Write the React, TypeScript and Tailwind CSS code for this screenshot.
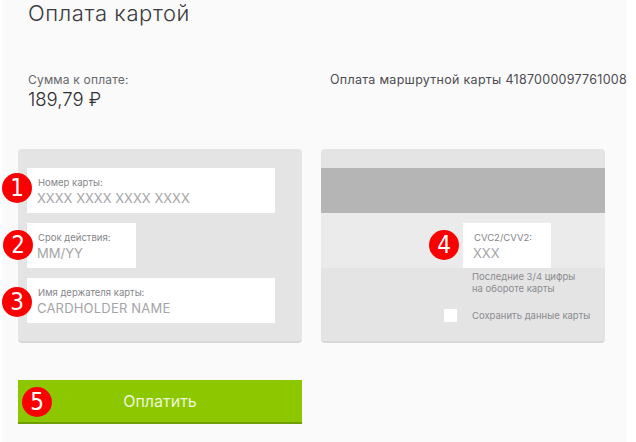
const FONT = "font-['Inter','Open_Sans',sans-serif]";

const Badge = ({ n, className }: { n: number; className: string }) => (
  <span
    className={`absolute flex h-[30px] w-[30px] items-center justify-center rounded-full bg-[#fa0000] font-['DejaVu_Sans_Condensed','DejaVu_Sans',sans-serif] text-[24px] font-normal leading-none tracking-normal text-white [font-stretch:condensed] ${className}`}
  >
    {n}
  </span>
);

const Field = ({
  label,
  placeholder,
  className,
  wide,
}: {
  label: string;
  placeholder: string;
  className: string;
  wide?: boolean;
}) => (
  <div className={`flex h-[45px] flex-col bg-white pl-[10px] pt-[9px] ${className}`}>
    <span className="pl-[1px] text-[9.5px] leading-[11px] text-[#85858a]">{label}</span>
    <span
      className={`mt-[2px] text-[13px] leading-[17px] text-[#a4a4a8] ${wide ? "tracking-[0.2px]" : ""}`}
    >
      {placeholder}
    </span>
  </div>
);

export default function App() {
  return (
    <div className={`h-[442px] w-[636px] overflow-hidden bg-white pl-[2px] ${FONT}`}>
      <div className="h-full w-[625px] bg-[#fafafa] pl-[16px]">
        <h1 className="pl-[10px] text-[22px] font-light leading-[27px] tracking-[0.6px] text-[#3a3a40]">
          Оплата картой
        </h1>

        <div className="mt-[45px] flex items-start justify-between pl-[10px]">
          <div>
            <p className="text-[12px] leading-[16px] tracking-[0.2px] text-[#68686c]">Сумма к оплате:</p>
            <p className="text-[18.5px] font-light leading-[22px] text-[#2e2e34]">189,79 ₽</p>
          </div>
          <p className="whitespace-nowrap text-[12.5px] leading-[16px] tracking-[0.28px] text-[#4c4c52]">
            Оплата маршрутной карты 4187000097761008
          </p>
        </div>

        <div className="mt-[39px] flex gap-[19px]">
          <div className="relative flex h-[194px] w-[284px] flex-col gap-[10px] rounded-[4px] border-b-2 border-[#d8d8d8] bg-[#e4e4e4] pl-[9px] pt-[19px]">
            <Field className="w-[248px]" label="Номер карты:" placeholder="XXXX XXXX XXXX XXXX" />
            <Field className="w-[109px]" label="Срок действия:" placeholder="MM/YY" />
            <Field className="w-[248px]" label="Имя держателя карты:" placeholder="CARDHOLDER NAME" wide />
            <Badge n={1} className="left-[-16px] top-[24px]" />
            <Badge n={2} className="left-[-15px] top-[81px]" />
            <Badge n={3} className="left-[-16px] top-[138px]" />
          </div>

          <div className="relative h-[194px] w-[284px] overflow-hidden rounded-[4px] border-b-2 border-[#d8d8d8] bg-[#e4e4e4] pt-[19px]">
            <div className="h-[45px] bg-[#b4b5b4]" />
            <div className="flex h-[55px] justify-end bg-[#ebebeb] pr-[54px] pt-[10px]">
              <Field className="w-[88px]" label="CVC2/CVV2:" placeholder="XXX" />
            </div>
            <p className="ml-[151px] mt-[3px] text-[9.5px] leading-[12px] text-[#8b8b90]">
              Последние 3/4 цифры
              <br />
              на обороте карты
            </p>
            <div className="mt-[14px] flex items-center">
              <span className="ml-[123px] h-[13px] w-[13px] bg-white" />
              <span className="ml-[15px] text-[9.5px] leading-[12px] text-[#8b8b90]">
                Сохранить данные карты
              </span>
            </div>
            <Badge n={4} className="left-[108px] top-[81px]" />
          </div>
        </div>

        <button className="relative mt-[37px] flex h-[44px] w-[284px] items-center justify-center border-b-2 border-[#6f9e00] bg-[#8dc700] text-[16px] text-[#eef6d8]">
          Оплатить
          <Badge n={5} className="left-[4px] top-[7px]" />
        </button>
      </div>
    </div>
  );
}
